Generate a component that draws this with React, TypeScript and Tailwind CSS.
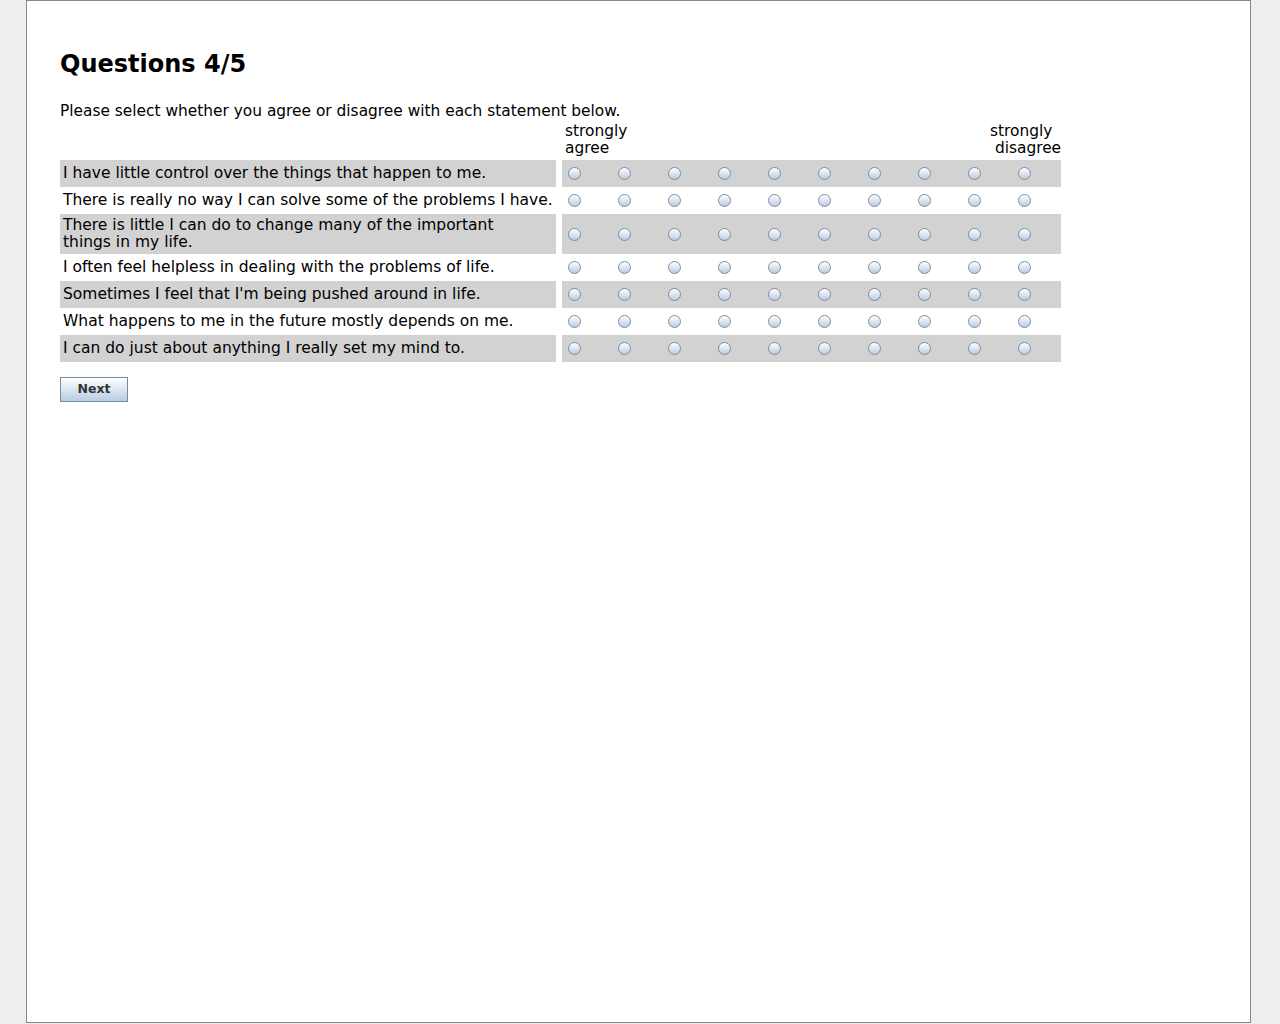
import React, { useState } from 'react';

const questions = [
  'I have little control over the things that happen to me.',
  'There is really no way I can solve some of the problems I have.',
  'There is little I can do to change many of the important\nthings in my life.',
  'I often feel helpless in dealing with the problems of life.',
  "Sometimes I feel that I'm being pushed around in life.",
  'What happens to me in the future mostly depends on me.',
  'I can do just about anything I really set my mind to.',
];

const SCALE = [0, 1, 2, 3, 4, 5, 6, 7, 8, 9];

function Radio({ checked, onClick }: { checked: boolean; onClick: () => void }) {
  return (
    <button
      type="button"
      onClick={onClick}
      className="flex h-[13px] w-[13px] shrink-0 items-center justify-center rounded-full border border-[#7d8d9c] bg-gradient-to-b from-white to-[#b9cce0]"
    >
      {checked && <span className="h-[5px] w-[5px] rounded-full bg-[#333]" />}
    </button>
  );
}

export default function App() {
  const [answers, setAnswers] = useState<Record<number, number>>({});

  return (
    <div className="min-h-screen bg-[#eeeeee] font-['DejaVu_Sans',sans-serif] text-black">
      <div className="ml-[26px] h-[1023px] w-[1225px] border border-[#7a8a99] bg-white pl-[33px] pt-[49px]">
        <h1 className="text-[24px] font-bold leading-[28px]">Questions 4/5</h1>
        <p className="mt-[25px] text-[15.4px] leading-[17px]">
          Please select whether you agree or disagree with each statement below.
        </p>

        {/* 헤더 */}
        <div className="flex pb-[3px] pt-[3px] text-[15.4px] leading-[17px]">
          <div className="w-[502px]" />
          <div className="flex w-[500px] pl-[3px]">
            <div>
              strongly
              <br />
              agree
            </div>
            <div className="ml-auto w-[72px]">
              strongly
              <br />
              &nbsp;disagree
            </div>
          </div>
        </div>

        <div className="flex flex-col">
          {questions.map((q, idx) => {
            const shaded = idx % 2 === 0;
            return (
              <div key={idx} className="flex gap-[6px]">
                <div
                  className={`flex w-[496px] items-center whitespace-pre px-[3px] py-[3px] text-[15.5px] leading-[17px] ${
                    shaded ? 'bg-[#d2d2d2]' : 'bg-white'
                  }`}
                >
                  {q}
                </div>
                <div
                  className={`flex min-h-[27px] w-[499px] items-center gap-[37px] pl-[6px] ${
                    shaded ? 'bg-[#d2d2d2]' : 'bg-white'
                  }`}
                >
                  {SCALE.map((v) => (
                    <Radio
                      key={v}
                      checked={answers[idx] === v}
                      onClick={() => setAnswers({ ...answers, [idx]: v })}
                    />
                  ))}
                </div>
              </div>
            );
          })}
        </div>

        <button
          type="button"
          className="mt-[15px] h-[25px] w-[68px] border border-[#7a8a99] bg-gradient-to-b from-white to-[#b8cde3] text-[12.5px] font-bold text-[#333]"
        >
          Next
        </button>
      </div>
    </div>
  );
}
